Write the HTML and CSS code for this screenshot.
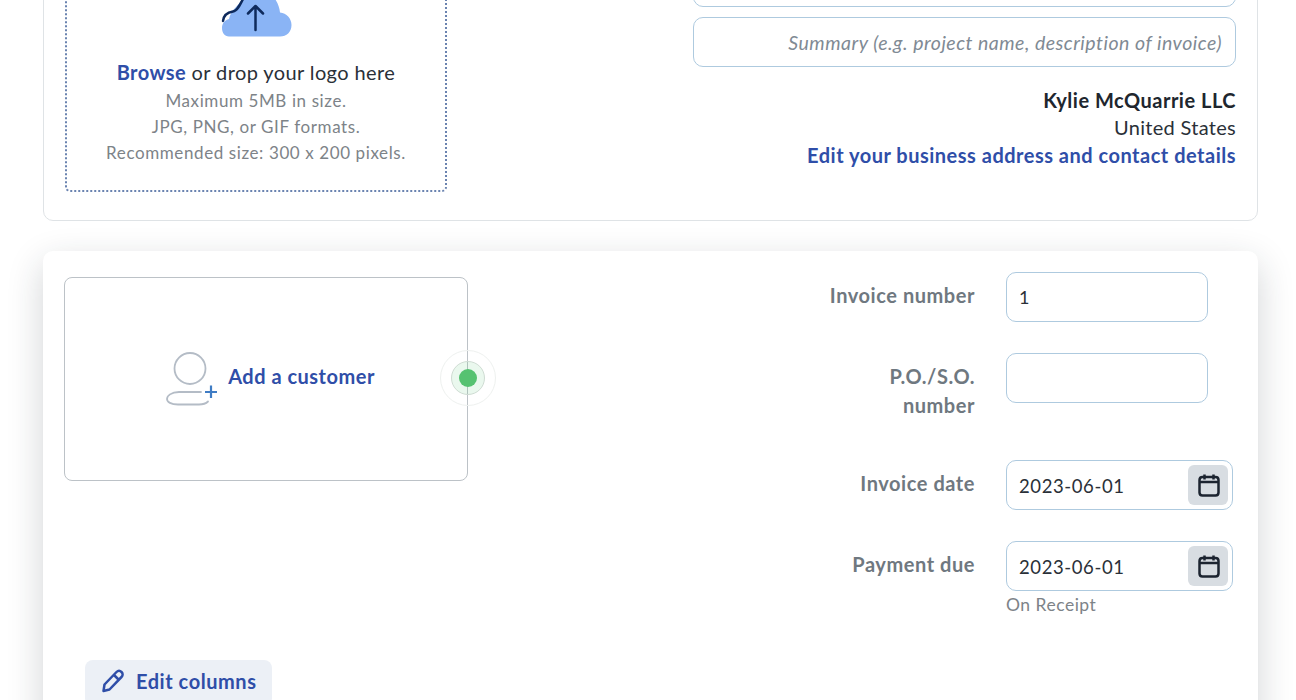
FILE: index.html
```html
<!DOCTYPE html>
<html lang="en">
<head>
<meta charset="utf-8">
<title>Invoice</title>
<link rel="stylesheet" href="styles.css">
</head>
<body>
<main class="page">
  <section class="card top-card">
    <div class="dropzone">
      <svg class="cloud" width="72" height="40" viewBox="0 0 72 40">
        <path d="M9 37.500C4.500 37.500 2 33.500 2 29C2 24 5 21 9 20C11 11 17 8 23 0L55 0C58 4 59.500 9 60 13.500C66.500 14 71.500 19.500 71.500 26C71.500 33 66.500 37.500 60 37.500Z" fill="#8ab4f5"/>
        <path d="M3 22C3.500 17 7 13.500 13 12.500C17 12 20 6 23 0" fill="none" stroke="#0e2a5c" stroke-width="2.500" stroke-linecap="round"/>
        <path d="M35.500 31V7M28 14.500L35.500 7L43 14.500" fill="none" stroke="#0e2a5c" stroke-width="2.500" stroke-linecap="round" stroke-linejoin="round"/>
      </svg>
      <p class="drop-title"><a class="link">Browse</a> or drop your logo here</p>
      <p class="drop-note">Maximum 5MB in size.</p>
      <p class="drop-note">JPG, PNG, or GIF formats.</p>
      <p class="drop-note">Recommended size: 300 x 200 pixels.</p>
    </div>
    <div class="business">
      <div class="field wide"></div>
      <div class="field wide summary">Summary (e.g. project name, description of invoice)</div>
      <div class="address">
        <strong>Kylie McQuarrie LLC</strong>
        <span>United States</span>
        <a class="link">Edit your business address and contact details</a>
      </div>
    </div>
  </section>

  <section class="card main-card">
    <div class="details">
      <div class="customer">
        <svg width="54" height="56" viewBox="0 0 54 56">
          <circle cx="25" cy="17.500" r="15.500" fill="none" stroke="#b4bcc6" stroke-width="1.800"/>
          <path d="M36 41H14C6 41 2 45 2 48C2 51 6 53.500 13 53.500H34C38 53.500 41 52.500 43 50.500" fill="none" stroke="#b4bcc6" stroke-width="1.800" stroke-linecap="round"/>
          <path d="M46 34.500V47M40 41H52" fill="none" stroke="#3f7cc4" stroke-width="2.200"/>
        </svg>
        <a class="link customer-link">Add a customer</a>
        <span class="pulse"><span class="pulse-mid"><span class="pulse-dot"></span></span></span>
      </div>
      <div class="meta">
        <div class="label">Invoice number</div>
        <div class="field short">1</div>
        <div class="label">P.O./S.O.<br>number</div>
        <div class="field short"></div>
        <div class="label">Invoice date</div>
        <div class="field date">2023-06-01
          <span class="cal"><svg width="22" height="24" viewBox="0 0 22 24"><path d="M6.500 1.500V6.500M15.500 1.500V6.500M1.500 9H20.500M4.500 4H17.500C19.500 4 20.500 5 20.500 7V19.500C20.500 21.500 19.500 22.500 17.500 22.500H4.500C2.500 22.500 1.500 21.500 1.500 19.500V7C1.500 5 2.500 4 4.500 4Z" fill="none" stroke="#1c2430" stroke-width="2.500"/></svg></span>
        </div>
        <div class="label">Payment due</div>
        <div class="date-wrap">
          <div class="field date">2023-06-01
            <span class="cal"><svg width="22" height="24" viewBox="0 0 22 24"><path d="M6.500 1.500V6.500M15.500 1.500V6.500M1.500 9H20.500M4.500 4H17.500C19.500 4 20.500 5 20.500 7V19.500C20.500 21.500 19.500 22.500 17.500 22.500H4.500C2.500 22.500 1.500 21.500 1.500 19.500V7C1.500 5 2.500 4 4.500 4Z" fill="none" stroke="#1c2430" stroke-width="2.500"/></svg></span>
          </div>
          <div class="hint">On Receipt</div>
        </div>
      </div>
    </div>
    <button class="edit-columns" type="button">
      <svg width="24" height="24" viewBox="0 0 24 24"><path d="M2.500 22L3.500 15.500L15.500 3C17 1.500 19 1.500 20.500 3C22 4.500 22 6.500 20.500 8L8.500 20.500ZM13 6L18 11" fill="none" stroke="#2f4ea8" stroke-width="2.500" stroke-linejoin="round"/></svg>
      Edit columns
    </button>
  </section>
</main>
</body>
</html>
```
FILE: styles.css
```css
* { box-sizing: border-box; }
html, body { margin: 0; height: 700px; overflow: hidden; background: #fff; }
body { font-family: Lato, "Noto Sans", sans-serif; color: #2a3038; }
p { margin: 0; }
.page { height: 700px; padding: 0 38px 0 43px; overflow: hidden; }
.link { color: #2f4ea8; font-weight: 700; }
.card { width: 1215px; border-radius: 10px; background: #fff; }

.top-card {
  height: 321px;
  margin-top: -100px;
  padding: 0 21px 28px 21px;
  border: 1px solid #dfe3e6;
  display: flex;
  justify-content: space-between;
  align-items: flex-end;
}
.dropzone {
  width: 382px;
  height: 292px;
  border: 2px dotted #6a83b0;
  border-radius: 5px;
  display: flex;
  flex-direction: column;
  align-items: center;
  justify-content: flex-end;
  padding-bottom: 24px;
}
.cloud { margin-bottom: 19px; margin-top: auto; }
.drop-title { font-size: 20px; line-height: 28px; margin-bottom: 2px; letter-spacing: .4px; }
.drop-note { font-size: 17px; line-height: 26px; color: #7d8388; letter-spacing: .6px; }

.business { width: 543px; display: flex; flex-direction: column; gap: 10px; align-self: flex-start; margin-top: 56px; }
.field {
  border: 1px solid #aecadf;
  border-radius: 10px;
  background: #fff;
  height: 50px;
  font-size: 18px;
  display: flex;
  align-items: center;
  padding-left: 12px;
  position: relative;
}
.wide { width: 543px; }
.summary { justify-content: flex-end; padding: 0 13px 0 0; font-style: italic; font-size: 19.500px; letter-spacing: .5px; color: #7f8a94; }
.address { display: flex; flex-direction: column; align-items: flex-end; font-size: 20px; line-height: 27.500px; margin-top: 9.500px; letter-spacing: .3px; }
.address strong { color: #20262e; font-weight: 700; letter-spacing: .5px; }
.address .link { letter-spacing: .5px; }

.main-card {
  height: 480px;
  margin-top: 30px;
  padding: 21px 0 0 21px;
  box-shadow: 0 12px 36px rgba(30, 40, 50, .2);
}
.details { display: flex; justify-content: space-between; align-items: flex-start; }
.customer {
  width: 404px;
  height: 204px;
  margin-top: 5px;
  padding-left: 8px;
  border: 1px solid #bcc2c7;
  border-radius: 8px;
  display: flex;
  align-items: center;
  justify-content: center;
  gap: 9px;
  font-size: 20px;
  letter-spacing: .5px;
  position: relative;
}
.customer-link { margin-bottom: 6px; }
.pulse {
  position: absolute;
  right: -29px;
  top: 72px;
  width: 56px;
  height: 56px;
  border-radius: 50%;
  border: 1px solid #eef1ef;
  display: flex;
  align-items: center;
  justify-content: center;
}
.pulse-mid {
  width: 34px;
  height: 34px;
  border-radius: 50%;
  background: rgba(86, 194, 113, .12);
  border: 1px solid #cfdcd3;
  display: flex;
  align-items: center;
  justify-content: center;
}
.pulse-dot { width: 18px; height: 18px; border-radius: 50%; background: #56c271; }

.meta {
  display: grid;
  grid-template-columns: 200px 227px;
  column-gap: 31px;
  row-gap: 31px;
  margin-right: 25px;
  align-items: start;
}
.label {
  text-align: right;
  font-size: 20px;
  font-weight: 700;
  line-height: 29px;
  padding: 9px 0;
  letter-spacing: .55px;
  color: #6f7880;
}
.short { width: 202px; }
.date { width: 227px; font-size: 18.500px; letter-spacing: .6px; padding-top: 2px; color: #2a3038; }
.cal {
  position: absolute;
  right: 4px;
  top: 4px;
  width: 40px;
  height: 40px;
  padding-left: 2px;
  border-radius: 6px;
  background: #d8dde2;
  display: flex;
  align-items: center;
  justify-content: center;
}
.date-wrap { display: flex; flex-direction: column; }
.hint { font-size: 17.500px; line-height: 24px; margin-top: 2px; letter-spacing: .5px; color: #7d8388; }

.edit-columns {
  margin: 43px 0 0 21px;
  width: 187px;
  height: 46px;
  padding: 0 0 4px 16px;
  border: 0;
  border-radius: 8px;
  background: #ecf0f6;
  color: #2f4ea8;
  font: 700 20px Lato, "Noto Sans", sans-serif;
  letter-spacing: .55px;
  display: flex;
  align-items: center;
  gap: 11px;
}
```
